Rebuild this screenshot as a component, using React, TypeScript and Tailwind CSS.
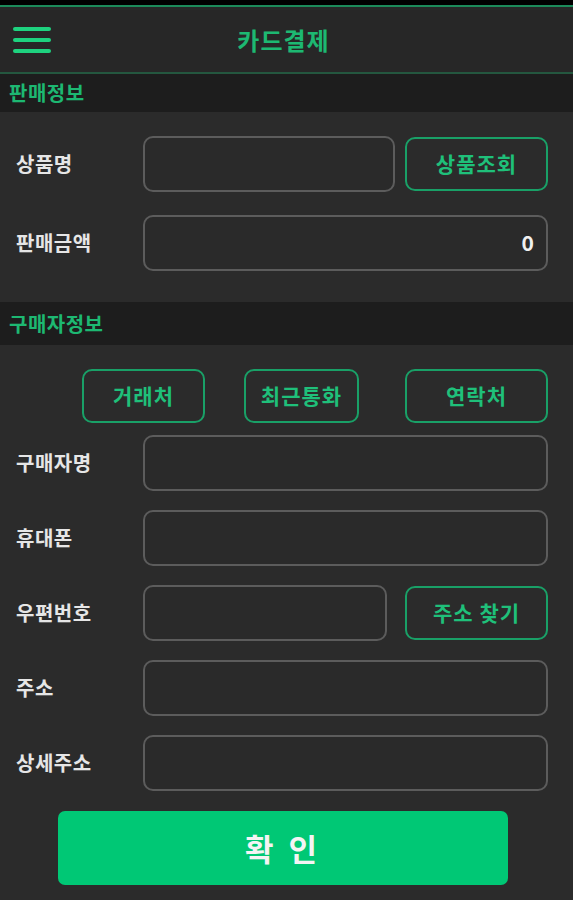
import React from "react"

const font = { fontFamily: '"Noto Sans CJK KR", "Noto Sans", sans-serif' }

const Field = ({ label, value, button, inputWidth }: { label: string; value?: string; button?: string; inputWidth?: string }) => (
	<div className="flex items-center h-[56px]">
		<div className="w-[143px] shrink-0 pl-[16px] text-[20px] font-bold tracking-[0.5px] text-[#e6e6e6]">{label}</div>
		<div
			className={`${inputWidth ?? "w-[405px]"} shrink-0 h-full rounded-[10px] border-2 border-[#5c5c5c] bg-[#2a2a2a] flex items-center justify-end pr-[12px] text-[21px] font-bold text-[#f0f0f0]`}
		>
			{value}
		</div>
		{button && (
			<div className="ml-auto mr-[25px] w-[143px] h-[54px] rounded-[10px] border-2 border-[#19a067] flex items-center justify-center text-[21px] font-bold tracking-[1px] text-[#1fc07a]">
				{button}
			</div>
		)}
	</div>
)

export default function App() {
	return (
		<div className="w-full h-[900px] bg-[#2b2b2b] overflow-hidden flex flex-col" style={font}>
			<div className="h-[5px] bg-black" />
			<div className="h-[2px] bg-[#1c8a5a]" />
			<div className="h-[65px] bg-[#272727] grid grid-cols-[80px_1fr_80px] items-center">
				<div className="pl-[13px] flex flex-col gap-[7px]">
					<div className="w-[38px] h-[4px] rounded-full bg-[#1ed27f]" />
					<div className="w-[38px] h-[4px] rounded-full bg-[#1ed27f]" />
					<div className="w-[38px] h-[4px] rounded-full bg-[#1ed27f]" />
				</div>
				<div className="text-center text-[24px] font-bold tracking-[1px] text-[#1db872] pr-[6px]">카드결제</div>
				<div />
			</div>
			<div className="h-[2px] bg-[#24573f]" />
			<div className="h-[38px] bg-[#1d1d1d] pl-[9px] flex items-center text-[20px] font-bold tracking-[0.5px] text-[#1db872]">
				판매정보
			</div>

			<div className="flex flex-col gap-[23px] pt-[24px]">
				<Field label="상품명" button="상품조회" inputWidth="w-[252px]" />
				<Field label="판매금액" value="0" />
			</div>

			<div className="mt-[31px] h-[43px] bg-[#1d1d1d] pl-[9px] flex items-center text-[20px] font-bold tracking-[0.5px] text-[#1db872]">
				구매자정보
			</div>

			<div className="flex pt-[24px] pl-[82px] h-[78px]">
				<div className="w-[123px] h-[54px] rounded-[10px] border-2 border-[#19a067] flex items-center justify-center text-[21px] font-bold tracking-[1px] text-[#1fc07a]">
					거래처
				</div>
				<div className="ml-[39px] w-[115px] h-[54px] rounded-[10px] border-2 border-[#19a067] flex items-center justify-center text-[21px] font-bold tracking-[1px] text-[#1fc07a]">
					최근통화
				</div>
				<div className="ml-[46px] w-[143px] h-[54px] rounded-[10px] border-2 border-[#19a067] flex items-center justify-center text-[21px] font-bold tracking-[1px] text-[#1fc07a]">
					연락처
				</div>
			</div>

			<div className="flex flex-col gap-[19px] pt-[12px]">
				<Field label="구매자명" />
				<Field label="휴대폰" />
				<Field label="우편번호" button="주소 찾기" inputWidth="w-[244px]" />
				<Field label="주소" />
				<Field label="상세주소" />
			</div>

			<div className="mt-[20px] ml-[58px] w-[450px] h-[74px] rounded-[7px] bg-[#00c875] flex items-center justify-center text-[31px] font-bold text-[#f4f4f4] tracking-[4px]">
				확 인
			</div>
		</div>
	)
}
